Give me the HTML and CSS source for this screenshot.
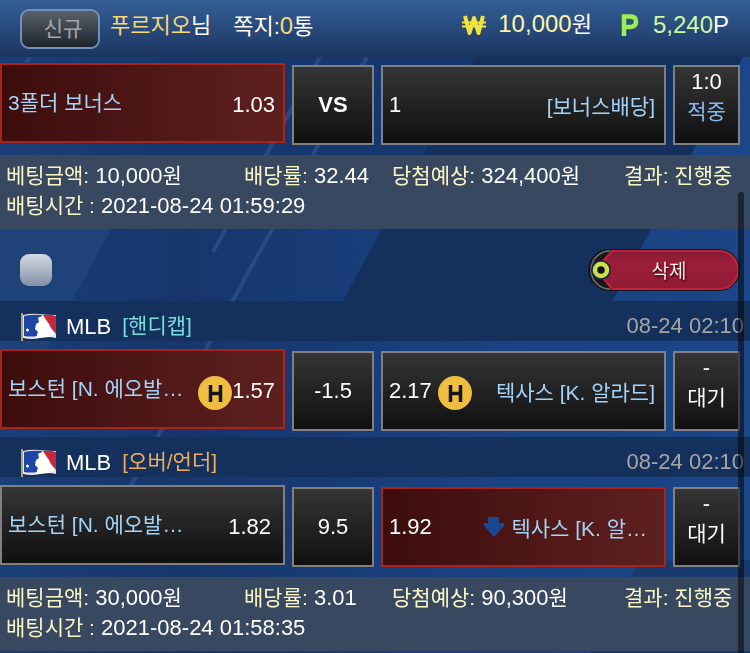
FILE: index.html
```html
<!DOCTYPE html>
<html lang="ko">
<head>
    <meta charset="UTF-8">
    <meta name="viewport" content="width=device-width, initial-scale=1.0">
    <title>베팅내역</title>
    <link rel="stylesheet" href="styles.css">
</head>
<body>
    <!-- Page backdrop -->
    <svg class="backdrop" viewBox="0 0 750 653" preserveAspectRatio="xMidYMid slice" aria-hidden="true">
        <defs>
            <linearGradient id="base" x1="0" y1="0" x2="1" y2="0">
                <stop offset="0" stop-color="#1a3e77"/>
                <stop offset="0.25" stop-color="#16366b"/>
                <stop offset="0.6" stop-color="#1a4080"/>
                <stop offset="1" stop-color="#1b4687"/>
            </linearGradient>
        </defs>
        <rect width="750" height="653" fill="url(#base)"/>
        <path d="M0 180L138 180L45 350L0 380Z" fill="#1f4379"/>
        <path d="M200 57L475 57L420 155L145 155Z" fill="#16376d"/>
        <path d="M475 57L743 57L600 325L330 325Z" fill="#14305c"/>
        <path d="M640 560L750 560L750 653L590 653Z" fill="#183a6e"/>
        <path d="M30 57L24 68M320 57L213 252M367 57L130 487" fill="none" stroke="#3a629b" stroke-width="4" opacity="0.45"/>
    </svg>

    <!-- User info -->
    <header class="header">
        <button type="button" class="new-btn">신규</button>
        <span class="user"><b>푸르지오</b>님</span>
        <a href="#" class="notes">쪽지:<b>0</b>통</a>
        <span class="balance">
            <svg class="won" width="24" height="22" viewBox="0 0 24 22" aria-hidden="true">
                <path d="M3 2L7.500 19L12 4L16.500 19L21 2" fill="none" stroke="#f3e43c" stroke-width="4" stroke-linejoin="round"/>
                <path d="M0 8.500H24M0 12.500H24" stroke="#f3e43c" stroke-width="2"/>
            </svg>
            <span class="cash"><b>10,000</b><span class="unit">원</span></span>
            <svg class="pt" width="18" height="22" viewBox="0 0 18 22" aria-hidden="true">
                <path d="M3 22V2.500H9.500Q15 2.500 15 7.500T9.500 13H3" fill="none" stroke="#9af052" stroke-width="4.500"/>
            </svg>
            <span class="point"><b>5,240</b>P</span>
        </span>
    </header>

    <main>
        <section class="card">
            <div class="row">
                <div class="cell home picked">
                    <span class="team">3폴더 보너스</span>
                    <span class="odds">1.03</span>
                </div>
                <div class="cell mid"><strong>VS</strong></div>
                <div class="cell away">
                    <span class="odds">1</span>
                    <span class="team">[보너스배당]</span>
                </div>
                <div class="cell state">
                    <span>1:0</span>
                    <span class="ko hit">적중</span>
                </div>
            </div>
            <div class="info">
                <span><i>베팅금액:</i> 10,000<span class="ko">원</span></span>
                <span><i>배당률:</i> 32.44</span>
                <span><i>당첨예상:</i> 324,400<span class="ko">원</span></span>
                <span><i>결과: 진행중</i></span>
                <span class="time"><i>배팅시간 :</i> 2021-08-24 01:59:29</span>
            </div>
        </section>

        <section class="card">
            <div class="tools">
                <input type="checkbox" class="check" aria-label="선택">
                <button type="button" class="delete-btn">
                    <svg width="152" height="42" viewBox="0 0 152 42" aria-hidden="true">
                        <defs>
                            <linearGradient id="red" x1="0" y1="0" x2="0" y2="1">
                                <stop offset="0" stop-color="#861a33"/>
                                <stop offset="0.3" stop-color="#9c1d39"/>
                                <stop offset="1" stop-color="#921b36"/>
                            </linearGradient>
                        </defs>
                        <rect width="152" height="42" rx="21" fill="#15171c"/>
                        <path d="M22 2A19 19 0 0 0 22 40" fill="none" stroke="#6f7276" stroke-width="1.500"/>
                        <path d="M24 2H131A19 19 0 0 1 131 40H24L15 29V12Z" fill="url(#red)" stroke="#c4213f" stroke-width="2"/>
                        <circle cx="13" cy="21" r="10" fill="#1b2a3c"/>
                        <circle cx="13" cy="21" r="6" fill="#101418" stroke="#cfe04a" stroke-width="4.500"/>
                    </svg>
                    <span>삭제</span>
                </button>
            </div>

            <div class="league">
                <svg class="flag" width="36" height="28" viewBox="0 0 36 28" aria-hidden="true">
                    <path d="M2 2Q10 0 18 1T35 2V25Q27 23 19 25T2 25Z" fill="#e6e6ea"/>
                    <path d="M3 3Q11 1 21 2L16 23Q9 24 3 23Z" fill="#1c46a8"/>
                    <path d="M22 2Q29 1 35 3V21L30 15L26 8Z" fill="#c9283b"/>
                    <path d="M17 5Q20 2 23 5L24 8L28 11L29 15L34 21L28 24L15 25L17 19L14 16L15 11L18 9Z" fill="#fff"/>
                    <circle cx="6.500" cy="17" r="1.500" fill="#fff"/>
                    <path d="M1 0V28" stroke="#b9a56a" stroke-width="2"/>
                </svg>
                <span class="name">MLB</span>
                <span class="type handicap">[핸디캡]</span>
                <time>08-24 02:10</time>
            </div>
            <div class="row">
                <div class="cell home picked">
                    <span class="team">보스턴 [N. 에오발…</span>
                    <svg class="mark" width="34" height="34" viewBox="0 0 34 34" aria-hidden="true">
                        <circle cx="17" cy="17" r="17" fill="#efbd42"/>
                        <path d="M12.500 9V26M22.500 9V26M12 17.500H22" stroke="#17170e" stroke-width="3.500"/>
                    </svg>
                    <span class="odds">1.57</span>
                </div>
                <div class="cell mid">-1.5</div>
                <div class="cell away">
                    <span class="odds">2.17</span>
                    <svg class="mark" width="34" height="34" viewBox="0 0 34 34" aria-hidden="true">
                        <circle cx="17" cy="17" r="17" fill="#efbd42"/>
                        <path d="M12.500 9V26M22.500 9V26M12 17.500H22" stroke="#17170e" stroke-width="3.500"/>
                    </svg>
                    <span class="team">텍사스 [K. 알라드]</span>
                </div>
                <div class="cell state">
                    <span>-</span>
                    <span class="ko">대기</span>
                </div>
            </div>

            <div class="league">
                <svg class="flag" width="36" height="28" viewBox="0 0 36 28" aria-hidden="true">
                    <path d="M2 2Q10 0 18 1T35 2V25Q27 23 19 25T2 25Z" fill="#e6e6ea"/>
                    <path d="M3 3Q11 1 21 2L16 23Q9 24 3 23Z" fill="#1c46a8"/>
                    <path d="M22 2Q29 1 35 3V21L30 15L26 8Z" fill="#c9283b"/>
                    <path d="M17 5Q20 2 23 5L24 8L28 11L29 15L34 21L28 24L15 25L17 19L14 16L15 11L18 9Z" fill="#fff"/>
                    <circle cx="6.500" cy="17" r="1.500" fill="#fff"/>
                    <path d="M1 0V28" stroke="#b9a56a" stroke-width="2"/>
                </svg>
                <span class="name">MLB</span>
                <span class="type overunder">[오버/언더]</span>
                <time>08-24 02:10</time>
            </div>
            <div class="row">
                <div class="cell home">
                    <span class="team">보스턴 [N. 에오발…</span>
                    <span class="odds">1.82</span>
                </div>
                <div class="cell mid">9.5</div>
                <div class="cell away picked">
                    <span class="odds">1.92</span>
                    <span class="team cut">
                        <svg width="20" height="20" viewBox="0 0 20 20" aria-hidden="true">
                            <path d="M4 0H15V6H20V9L10 20L0 9V6H4Z" fill="#1b4790"/>
                        </svg>
                        텍사스 [K. 알…
                    </span>
                </div>
                <div class="cell state">
                    <span>-</span>
                    <span class="ko">대기</span>
                </div>
            </div>
            <div class="info">
                <span><i>베팅금액:</i> 30,000<span class="ko">원</span></span>
                <span><i>배당률:</i> 3.01</span>
                <span><i>당첨예상:</i> 90,300<span class="ko">원</span></span>
                <span><i>결과: 진행중</i></span>
                <span class="time"><i>배팅시간 :</i> 2021-08-24 01:58:35</span>
            </div>
        </section>
    </main>

    <div class="scroll-thumb"></div>
</body>
</html>
```

FILE: styles.css
```css
* {
    box-sizing: border-box;
}

body {
    margin: 0;
    background-color: #1a3e77;
    color: #fff;
    font-family: "Liberation Sans", "Noto Sans CJK KR", sans-serif;
    font-size: 22px;
    line-height: 30px;
    overflow-x: hidden;
}

.backdrop {
    position: fixed;
    top: 0;
    left: 0;
    width: 100%;
    height: 100%;
    z-index: -1;
}

.ko {
    font-size: 21px;
}

/* header */
.header {
    position: relative;
    z-index: 1;
    display: flex;
    align-items: flex-start;
    padding: 9px 21px 8px 20px;
    background: linear-gradient(#365f96, #1a3561);
    white-space: nowrap;
}

.header b {
    font-weight: normal;
}

.new-btn {
    width: 80px;
    height: 40px;
    padding: 0 0 4px 6px;
    border: 2px solid #6f90bd;
    border-radius: 9px;
    background: linear-gradient(#59616b, #1d242c);
    color: #a3a7ab;
    font-family: inherit;
    font-size: 21px;
}

.user,
.notes {
    line-height: 34px;
}

.user {
    margin-left: 10px;
}

.user b,
.notes b {
    color: #f8d978;
}

.notes {
    margin-left: 22px;
    color: #fff;
    text-decoration: none;
}

.notes b {
    font-size: 24px;
}

.balance {
    display: flex;
    align-items: center;
    margin-left: auto;
    font-size: 24px;
}

.unit {
    font-size: 22px;
}

.won {
    margin-right: 12px;
}

.pt {
    margin: 0 14px 0 29px;
}

.cash b {
    color: #fdf6a8;
}

.point b {
    color: #cdf9a0;
}

/* bet rows */
.card:first-child {
    margin-top: -2px;
}

.row {
    display: grid;
    grid-template-columns: 285fr 82fr 285fr 67fr;
    gap: 7px;
    align-items: start;
    padding: 8px 10px 6px 0;
}

.cell {
    display: flex;
    align-items: center;
    height: 80px;
    min-width: 0;
    margin-top: 2px;
    border: 2px solid #808080;
    background: linear-gradient(#353535, #101010);
    white-space: nowrap;
}

.picked {
    border-color: #a9231b;
    background: linear-gradient(to right, #3c0d0c, #5e201f);
}

.home {
    margin-top: 0;
    padding: 4px 12px 0 6px;
}

.home.picked {
    padding-right: 8px;
}

.away {
    padding: 0 9px 0 6px;
}

.home .odds,
.away .team {
    margin-left: auto;
}

.team {
    color: #a3d3f8;
    font-size: 21px;
}

.home .team {
    padding-bottom: 4px;
}

.away .team {
    padding-top: 4px;
}

.mark {
    flex: none;
    margin-top: 4px;
}

.home .mark {
    margin-left: auto;
}

.home .mark + .odds {
    margin-left: 0;
}

.away .mark {
    margin-left: 6px;
}

.cut {
    display: flex;
    align-items: center;
    gap: 7px;
    padding-right: 8px;
}

.cut svg {
    margin-bottom: 4px;
}

.mid {
    justify-content: center;
}

.state {
    flex-direction: column;
}

.hit {
    color: #86b8f5;
}

/* bet summary */
.info {
    display: grid;
    grid-template-columns: 238fr 148fr 232fr 126fr;
    margin-top: 4px;
    padding: 6px 0 8px 6px;
    background-color: #384860;
    white-space: nowrap;
}

.info i {
    color: #fbf7c4;
    font-size: 21px;
    font-style: normal;
}

.time {
    grid-column: 1 / -1;
}

/* select / delete */
.tools {
    display: flex;
    align-items: center;
    justify-content: space-between;
    padding: 20px 10px 10px 20px;
}

.check {
    appearance: none;
    width: 32px;
    height: 32px;
    margin: 0;
    border-radius: 9px;
    background: linear-gradient(#d3d9e2, #8392a6);
}

.check:checked {
    background: #86b8f5;
}

.delete-btn {
    position: relative;
    width: 152px;
    height: 42px;
    padding: 0 0 2px 10px;
    border: 0;
    background: none;
    color: #eee;
    font-family: inherit;
    font-size: 19px;
    text-shadow: 1px 2px 2px #400;
}

.delete-btn svg {
    position: absolute;
    left: 0;
    top: 0;
}

.delete-btn span {
    position: relative;
}

/* league bar */
.league {
    display: flex;
    align-items: flex-end;
    height: 40px;
    padding: 0 6px 0 21px;
    background-color: #14305c;
    white-space: nowrap;
}

.name {
    margin-left: 9px;
    line-height: 28px;
}

.type {
    margin-left: 11px;
    font-size: 21px;
}

.handicap {
    color: #79dcd8;
}

.overunder {
    color: #f3ab5b;
}

.league time {
    margin-left: auto;
    color: #a5a5a5;
}

.scroll-thumb {
    position: fixed;
    top: 192px;
    right: 6px;
    bottom: -4px;
    width: 6px;
    border-radius: 3px;
    background-color: rgba(0, 0, 0, 0.5);
}
```
